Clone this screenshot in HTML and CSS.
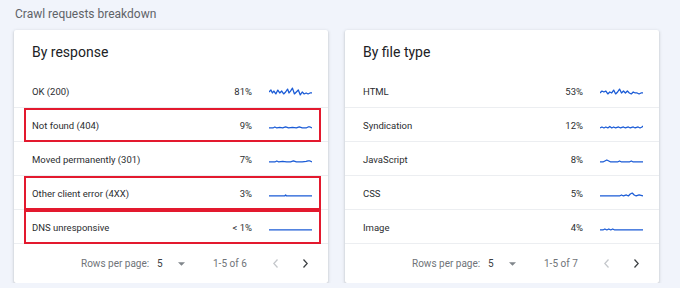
FILE: index.html
```html
<!DOCTYPE html>
<html lang="en">
<head>
    <meta charset="UTF-8">
    <meta name="viewport" content="width=device-width, initial-scale=1.0">
    <title>Crawl requests breakdown</title>
    <link rel="stylesheet" href="styles.css">
</head>
<body>
    <div class="page">
        <div class="section-title">Crawl requests breakdown</div>

        <div class="cards">
            <!-- By response -->
            <div class="card">
                <div class="card-title">By response</div>
                <div class="rows">
                    <div class="row">
                        <span class="label">OK (200)</span>
                        <span class="pct">81%</span>
                        <svg class="spark" viewBox="0 0 44 12"><polyline points="0,6 2,4 3.5,7 5,5 7,8 9,4 11,7 13,5 15,8 17,6 19,3 20.5,7 22,5 24,2 26,8 28,6 30,4 32,9 34,6 36,8 38,7 40,8 42,7 44,7"/></svg>
                    </div>
                    <div class="row marked">
                        <span class="label">Not found (404)</span>
                        <span class="pct">9%</span>
                        <svg class="spark" viewBox="0 0 44 12"><polyline points="0,8 4,8 6,7 8,8 11,7.5 14,8 17,7 20,8 24,7.5 28,8 31,7 34,8 38,8 40,7 42,7 44,8"/></svg>
                    </div>
                    <div class="row">
                        <span class="label">Moved permanently (301)</span>
                        <span class="pct">7%</span>
                        <svg class="spark" viewBox="0 0 44 12"><polyline points="0,8 6,8 8,7 10,8 14,7.5 18,8 22,8 25,7 28,8 34,8 38,7.5 40,7 42,7 44,8"/></svg>
                    </div>
                    <div class="row marked">
                        <span class="label">Other client error (4XX)</span>
                        <span class="pct">3%</span>
                        <svg class="spark" viewBox="0 0 44 12"><polyline points="0,8 16,8 17,7 18,8 44,8"/></svg>
                    </div>
                    <div class="row marked">
                        <span class="label">DNS unresponsive</span>
                        <span class="pct">&lt; 1%</span>
                        <svg class="spark" viewBox="0 0 44 12"><polyline points="0,8 44,8"/></svg>
                    </div>
                </div>
                <div class="footer">
                    <span class="rows-label">Rows per page:</span>
                    <span class="rows-count">5</span>
                    <svg class="caret" viewBox="0 0 8 4"><path d="M0 0h8L4 4z"/></svg>
                    <span class="range">1-5 of 6</span>
                    <svg class="chev off" viewBox="0 0 5 9"><path d="M4.5 0.5L0.8 4.5l3.7 4"/></svg>
                    <svg class="chev" viewBox="0 0 5 9"><path d="M0.5 0.5l3.7 4-3.7 4"/></svg>
                </div>
            </div>

            <!-- By file type -->
            <div class="card">
                <div class="card-title">By file type</div>
                <div class="rows">
                    <div class="row">
                        <span class="label">HTML</span>
                        <span class="pct">53%</span>
                        <svg class="spark" viewBox="0 0 44 12"><polyline points="0,7 2,5 4,6 6,5 8,8 10,6 12,7 14,4 16,8 18,6 20,3 22,7 24,5 26,7 28,5 30,7 32,8 34,6 36,7 38,7 40,8 42,7 44,7"/></svg>
                    </div>
                    <div class="row">
                        <span class="label">Syndication</span>
                        <span class="pct">12%</span>
                        <svg class="spark" viewBox="0 0 44 12"><polyline points="0,8 2,7 4,8 6,7 8,8 10,6.5 12,8 14,7 16,8 19,7 21,8 24,7 26,8 29,7 31,8 34,7 36,8 39,7 41,8 43,7 44,6"/></svg>
                    </div>
                    <div class="row">
                        <span class="label">JavaScript</span>
                        <span class="pct">8%</span>
                        <svg class="spark" viewBox="0 0 44 12"><polyline points="0,8 3,8 5,7 7,6 9,7 11,8 18,8 20,7 22,8 30,8 32,7 34,8 44,8"/></svg>
                    </div>
                    <div class="row">
                        <span class="label">CSS</span>
                        <span class="pct">5%</span>
                        <svg class="spark" viewBox="0 0 44 12"><polyline points="0,8 20,8 22,7 24,8 27,7 29,8 31,6 33,5 35,7 37,8 40,7 44,8"/></svg>
                    </div>
                    <div class="row">
                        <span class="label">Image</span>
                        <span class="pct">4%</span>
                        <svg class="spark" viewBox="0 0 44 12"><polyline points="0,8 3,8 5,7 7,8 9,7 11,8 13,7 15,8 44,8"/></svg>
                    </div>
                </div>
                <div class="footer">
                    <span class="rows-label">Rows per page:</span>
                    <span class="rows-count">5</span>
                    <svg class="caret" viewBox="0 0 8 4"><path d="M0 0h8L4 4z"/></svg>
                    <span class="range">1-5 of 7</span>
                    <svg class="chev off" viewBox="0 0 5 9"><path d="M4.5 0.5L0.8 4.5l3.7 4"/></svg>
                    <svg class="chev" viewBox="0 0 5 9"><path d="M0.5 0.5l3.7 4-3.7 4"/></svg>
                </div>
            </div>
        </div>
    </div>
</body>
</html>
```

FILE: styles.css
```css
body {
    margin: 0;
    padding: 0;
    font-family: Roboto, "Liberation Sans", Arial, sans-serif;
    background-color: #f1f4fb;
    color: #202124;
}

.page {
    padding: 6px 21px 0 14px;
}

.section-title {
    font-size: 12px;
    line-height: 16px;
    color: #5f6368;
    padding-left: 1px;
    margin-bottom: 8px;
}

.cards {
    display: grid;
    grid-template-columns: 314px 314px;
    column-gap: 17px;
}

.card {
    background-color: #fff;
    border-radius: 2px;
    box-shadow: 0 1px 2px rgba(60, 64, 67, 0.2), 0 1px 3px 1px rgba(60, 64, 67, 0.1);
    height: 253px;
}

.card-title {
    font-size: 14px;
    line-height: 20px;
    padding: 12px 18px;
}

.row {
    position: relative;
    box-sizing: border-box;
    display: flex;
    align-items: center;
    height: 34px;
    padding: 2px 16px 0 18px;
    border-bottom: 1px solid #eceef1;
    font-size: 9.5px;
    color: #2b2d30;
}

.row .label {
    flex: 1;
}

.row .pct {
    width: 60px;
    text-align: right;
}

.spark {
    width: 43px;
    height: 12px;
    margin: 1px 0 0 17px;
    fill: none;
    stroke: #1a5bd6;
    stroke-width: 1.3;
    stroke-linejoin: round;
}

.row.marked::after {
    content: "";
    position: absolute;
    left: 10px;
    right: 7px;
    top: 0;
    bottom: -1px;
    border: 2px solid #e3192e;
}

.footer {
    display: flex;
    align-items: center;
    height: 39px;
    padding-left: 67px;
    font-size: 10px;
    color: #6f7378;
}

.rows-label {
    width: 76px;
}

.rows-count {
    width: 21px;
    color: #3c4043;
}

.caret {
    width: 7px;
    height: 4px;
    margin-right: 28px;
    fill: #80868b;
}

.range {
    width: 60px;
}

.chev {
    width: 5px;
    height: 9px;
    fill: none;
    stroke: #3c4043;
    stroke-width: 1.3;
}

.chev.off {
    margin-right: 25px;
    stroke: #c4c7cb;
}
```
